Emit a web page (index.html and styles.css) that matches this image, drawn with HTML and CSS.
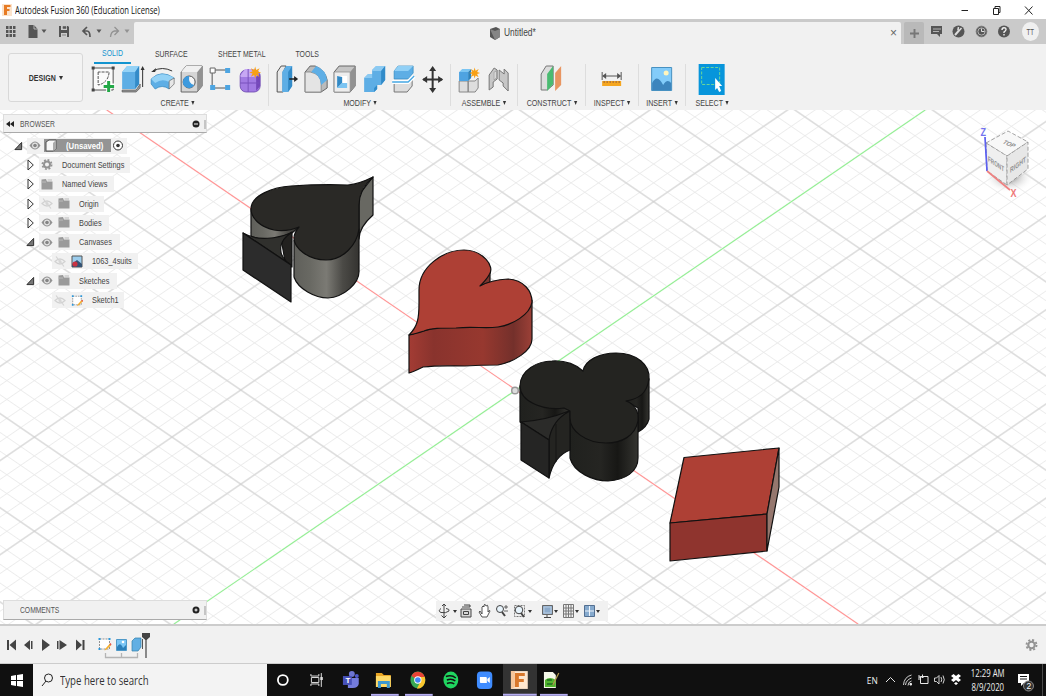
FILE: index.html
```
<!DOCTYPE html>
<html lang="en">
<head>
<meta charset="utf-8">
<title>Autodesk Fusion 360</title>
<link rel="stylesheet" href="styles.css">
</head>
<body>
<svg class="defs" width="0" height="0">
  <symbol id="eye" viewBox="0 0 12 12"><path d="M.5 6Q6 -2 11.500 6Q6 14 .5 6Z" fill="#929292"/><circle cx="6" cy="6" r="2.900" fill="#e4e4e4"/><circle cx="6" cy="6" r="1.800" fill="#858585"/></symbol>
  <symbol id="eyeoff" viewBox="0 0 12 12"><path d="M1 6Q6 1 11 6Q6 11 1 6ZM2 1L10 11" fill="none" stroke="#d2d2d2" stroke-width="1.2"/><circle cx="6" cy="6" r="1.5" fill="#d6d6d6"/></symbol>
  <symbol id="folder" viewBox="0 0 12 12"><path d="M0.5 1L5 0.5L6 3H11.5V11H.5Z" fill="#9a9a9a"/><path d="M6.5 1.5H11M.5 3.5H5" stroke="#b9b9b9"/></symbol>
  <symbol id="gear" viewBox="0 0 14 14"><circle cx="7" cy="7" r="3.5" fill="none" stroke="#939393" stroke-width="2.3"/><circle cx="7" cy="7" r="5.4" fill="none" stroke="#939393" stroke-width="2" stroke-dasharray="2.2 2.04"/></symbol>
  <symbol id="closed" viewBox="0 0 8 12"><path d="M1.5 1L6.8 6L1.5 11Z" fill="#f8f8f8" stroke="#333"/></symbol>
  <symbol id="open" viewBox="0 0 10 10"><path d="M8.5 1V9H1Z" fill="#777" stroke="#222"/></symbol>
  <symbol id="star" viewBox="0 0 12 12"><path d="M6 0L7 3.5L10.5 1.7L8.7 5L12 6L8.7 7L10.3 10.5L7 8.6L6 12L5 8.6L1.7 10.3L3.4 7L0 6L3.4 5L1.7 1.7L5 3.5Z" fill="#f8a014"/></symbol>
  <symbol id="sketch" viewBox="0 0 14 14"><path d="M2 2H12V12H2Z" fill="#fff" stroke="#777" stroke-width=".8" stroke-dasharray="2 1"/><path d="M1 1h2v2H1ZM11 1h2v2h-2ZM1 11h2v2H1Z" fill="#2b98dc"/><path d="M12.5 6.5L8 11.5L7 13.5L9.2 12.5L13.8 8Z" fill="#f5ae2d"/><path d="M12.5 6.5l1.3 1.5" stroke="#e15252" stroke-width="1.5"/></symbol>
</svg>

<header class="titlebar">
  <svg width="10" height="12" viewBox="0 0 10 12"><path d="M0 0H10V12H0Z" fill="#fbe3cc"/><path d="M2 1H8.500V3H5V5H7.500V7H5V11H2Z" fill="#e77b24"/></svg>
  <span class="title">Autodesk Fusion 360 (Education License)</span>
  <svg class="winctl" width="80" height="16" viewBox="0 0 80 16"><path d="M1.500 8.500H8M65 4.500L72.500 12.500M72.500 4.500L65 12.500" stroke="#222" fill="none"/><path d="M33.500 6.500H38.500V12.500H33.500ZM35 6V4.500H40V10.500H39" fill="none" stroke="#222"/></svg>
</header>

<div class="tabstrip">
  <div class="quick">
    <svg width="134" height="25" viewBox="0 0 134 25" fill="#555">
      <path d="M6 7h2.500v3H6zM9.500 7H12v3H9.500zM13 7h2.500v3H13zM6 11h2.500v3H6zM9.500 11H12v3H9.500zM13 11h2.500v3H13zM6 15h2.500v3H6zM9.500 15H12v3H9.500zM13 15h2.500v3H13z"/>
      <path d="M28.500 6H34L37.500 10V19H28.500Z"/><path d="M34 6V10H37.500" stroke="#ccc" fill="none" stroke-width=".8"/>
      <path d="M41.500 10.500H46.500L44 14Z"/>
      <path d="M59 7H68L69 8V18H59Z"/><path d="M61 7H67V11H61ZM61 14H67V18H61Z" fill="#ccc"/><path d="M63 7.500H66V9.500H63ZM62 16H66" stroke="#666" stroke-width=".7"/>
      <path d="M87 8L83 12L87 16M83.500 12H87Q90 12 90 18" stroke="#555" stroke-width="1.700" fill="none"/>
      <path d="M96.500 10.500H101.500L99 14Z"/>
      <path d="M114.500 8L118.500 12L114.500 16M118 12H114.500Q111 12.500 110.500 18" stroke="#929292" stroke-width="1.300" fill="none"/>
      <path d="M124.500 10.500H129.500L127 14Z" fill="#929292"/>
    </svg>
  </div>
  <div class="doc"><svg width="12" height="13" viewBox="0 0 12 13"><path d="M1 2L7 0L11 2V10L6 13L1 10Z" fill="#555"/><path d="M1 2L6 4L11 2V10L6 13Z" fill="#858585"/></svg><span>Untitled*</span><i>×</i></div>
  <div class="plus"><svg width="11" height="11" viewBox="0 0 11 11"><path d="M5.500 1V10M1 5.500H10" stroke="#777" stroke-width="1.900"/></svg></div>
  <svg width="121" height="25" viewBox="0 0 121 25"><path d="M6 7H17V15H15V18L12 15H6Z" fill="#555"/><path d="M8 10H16M8 12.500H14" stroke="#ccc" stroke-width=".8"/><circle cx="33.500" cy="12.500" r="6" fill="#555"/><path d="M30 16L34 11.500" stroke="#ddd" stroke-width="2"/><path d="M36.500 9L34.500 11.300L33 10.500L33.500 8" stroke="#ddd" stroke-width="1.500" fill="none"/><circle cx="56.500" cy="12.500" r="5.300" fill="#555" stroke="#777"/><circle cx="56.500" cy="12.500" r="3.600" fill="none" stroke="#ccc" stroke-width=".8"/><path d="M56.500 9.500V12.500H59.500" stroke="#ddd" fill="none"/><circle cx="79" cy="12.500" r="6" fill="#555"/><path d="M77 11Q77 8.700 79 8.700Q81.200 8.700 81 10.700Q80.700 12 79 13V14M79 15V16.500" stroke="#eee" stroke-width="1.400" fill="none"/><ellipse cx="105.500" cy="12.500" rx="8.500" ry="9.500" fill="#f0f0f0"/><text x="101.500" y="15.500" textLength="7.500" lengthAdjust="spacingAndGlyphs" font-size="8.500" fill="#555">TT</text></svg>
</div>

<section class="ribbon">
  <button class="design"><span>DESIGN</span><b></b></button>
  <div class="tools">
    <nav class="tabs"><span class="on"><em>SOLID</em></span><span class="surface"><em>SURFACE</em></span><span class="wide"><em>SHEET METAL</em></span><span class="last"><em>TOOLS</em></span></nav>
    <div class="groups">
      <div class="group create"><div class="icons">
        <svg viewBox="0 0 29 32"><path d="M4 4H24V26H4Z" fill="#fafafa" stroke="#555" stroke-width="1"/><path d="M9 8V21Q19 19 20 8Z" fill="none" stroke="#555" stroke-dasharray="3 1"/><path d="M2.500 2.500h3v3h-3zM22.500 2.500h3v3h-3zM2.500 24.500h3v3h-3z" fill="#444"/><path d="M19.500 16V28M14 22H26" stroke="#fff" stroke-width="5"/><path d="M19.500 17V28M14.500 22.500H25" stroke="#22a847" stroke-width="3"/></svg>
        <svg viewBox="0 0 29 32"><path d="M4 26L18 26L22 20V24L18 28H4Z" fill="#999" stroke="#555" stroke-width=".7"/><path d="M4 8L9 2H21V20L17 25H4Z" fill="#5eaee5"/><path d="M4 8L9 2H21L17 8Z" fill="#94d2f6"/><path d="M17 8L21 2V20L17 25Z" fill="#338bc8"/><path d="M24.500 4V23" stroke="#333"/><path d="M22.500 6L24.500 2L26.500 6Z" fill="#333"/></svg>
        <svg viewBox="0 0 29 32"><path d="M5 7Q14 2 24 7" fill="none" stroke="#333"/><path d="M3 8L8 4L7 8Z" fill="#333"/><path d="M3 15Q13 5 26 14L21 25Q14 20 7 25L3 20Z" fill="#5eaee5" stroke="#3788bd" stroke-width=".7"/><path d="M3 15Q13 6 26 14L21 18Q14 14 7 19Z" fill="#94d2f6"/><path d="M21 17L26 14V20L21 25Z" fill="#e7e7e7" stroke="#666" stroke-width=".7"/></svg>
        <svg viewBox="0 0 29 32"><path d="M4 8L9 2H25V22L20 28H4Z" fill="#d5d5d5" stroke="#666"/><path d="M20 8L25 2V22L20 28Z" fill="#929292"/><path d="M4 8L9 2H25L20 8Z" fill="#f0f0f0"/><circle cx="12" cy="18" r="6" fill="#f5f5f5" stroke="#555"/><path d="M12 12A6 6 0 1 0 17 21Q11 20 12 12Z" fill="#3d9ade"/></svg>
        <svg viewBox="0 0 29 32"><path d="M6 6H22M6 6V24H22" fill="none" stroke="#555"/><path d="M4 4h5v5H4z" fill="#fff" stroke="#666"/><path d="M19 4h5v5h-5zM4 21h5v5H4zM19 21h5v5h-5z" fill="#4da5e2"/></svg>
        <svg viewBox="0 0 29 32"><rect x="4" y="6" width="20" height="22" rx="6" fill="#a27be3" stroke="#6a46ad" stroke-width=".8"/><path d="M4 12L9 5H18L21 11L18 13H5Z" fill="#c7a8f4"/><path d="M20 13L24 10V22L20 27Z" fill="#7548ba"/><path d="M12 5V28M4 19H23" stroke="#7951bd"/><use href="#star" x="13" y="2" width="12" height="13"/></svg>
      </div><p>CREATE<b></b></p></div>
      <div class="group modify"><div class="icons">
        <svg viewBox="0 0 29 32"><path d="M5 8L9 2H14L11 8V28H5Z" fill="#e8e8e8" stroke="#555"/><path d="M10 8L14 2H20V22L16 28H10Z" fill="#5eaee5"/><path d="M16 8L20 2V22L16 28Z" fill="#338bc8"/><path d="M17 15H23" stroke="#222" stroke-width="1.500"/><path d="M22 12L26 15L22 18Z" fill="#222"/></svg>
        <svg viewBox="0 0 29 32"><path d="M4 8L9 2H14Q24 6 26 16V24L20 28H4Z" fill="#bbb" stroke="#666"/><path d="M4 8H9Q20 10 20 20V28H4Z" fill="#e4e4e4" stroke="#777" stroke-width=".7"/><path d="M10 8L15 2Q25 6 26 16L20 21Q19 10 10 8Z" fill="#5eaee5"/></svg>
        <svg viewBox="0 0 29 32"><path d="M4 8L9 2H25V22L20 28H4Z" fill="#c6c6c6" stroke="#666"/><path d="M4 8H20V28H4Z" fill="#ededed" stroke="#888" stroke-width=".7"/><path d="M20 8L25 2V22L20 28Z" fill="#929292"/><path d="M7 12H17V24H7Z" fill="#fff"/><path d="M7 12L12 13V19L7 24Z" fill="#3289c5"/><path d="M7 24L12 19H17V24Z" fill="#7bc4f2"/></svg>
        <svg viewBox="0 0 29 32"><path d="M4 14L8 10H12V6L16 2H25V16L21 21H17V25L14 28H4Z" fill="#5eaee5"/><path d="M12 6L16 2H25L21 7H12ZM4 14L8 10H12V14Z" fill="#8ccaf2"/><path d="M21 7L25 2V16L21 21ZM14 24L17 21V25L14 28Z" fill="#318bc9"/></svg>
        <svg viewBox="0 0 29 32"><path d="M5 19H18L23 15V22L18 28H5Z" fill="#ddd" stroke="#777"/><path d="M5 7L9 2H24V9L19 15H5Z" fill="#5eaee5" stroke="#3188bf" stroke-width=".7"/><path d="M5 7L9 2H24L19 7Z" fill="#91d0f6"/><path d="M3 18H19L25 12" fill="none" stroke="#fff" stroke-width="4"/><path d="M3 18H19L25 12" fill="none" stroke="#46a8e4" stroke-width="1.300"/></svg>
        <svg viewBox="0 0 29 32"><path d="M14.500 4V27M5 15.500H24" stroke="#333" stroke-width="2"/><path d="M14.500 2L18 7H11ZM14.500 29L18 24H11ZM4 15.500L9 12V19ZM25 15.500L20 12V19Z" fill="#333"/></svg>
      </div><p>MODIFY<b></b></p></div>
      <div class="group assemble"><div class="icons">
        <svg viewBox="0 0 29 32"><path d="M4 17H13V28H4ZM13 17H20L23 14V24L20 28H13Z" fill="#dedede" stroke="#888"/><path d="M4 8L7 5H16L13 8V17H4Z" fill="#7bc5f2"/><path d="M4 8H13V17H4Z" fill="#4ea3e1"/><path d="M13 8L16 5V14L13 17Z" fill="#2c82bd"/><use href="#star" x="14" y="3" width="11" height="12"/></svg>
        <svg viewBox="0 0 29 32"><path d="M5 11L10 4L13 6V15L9 18V23L5 26ZM15 6L20 10V5L24 9V27L19 22V19L15 16Z" fill="#c7c7c7" stroke="#777"/><path d="M10 8L12 7V14L10 16Z" fill="#eee" stroke="#888" stroke-width=".6"/></svg>
      </div><p>ASSEMBLE<b></b></p></div>
      <div class="group construct"><div class="icons"><svg viewBox="0 0 29 32"><path d="M4 10L9 2H16V21L10 26H4Z" fill="#ddd" stroke="#777"/><path d="M10 10L16 2V20L10 27Z" fill="#4abb71"/><path d="M18 9L24 2V21L18 27Z" fill="#e89561"/></svg></div><p>CONSTRUCT<b></b></p></div>
      <div class="group inspect"><div class="icons"><svg viewBox="0 0 29 32"><path d="M5 8V16M24 8V16M6 12H23" stroke="#555"/><path d="M5 12L9 9V15ZM24 12L20 9V15Z" fill="#555"/><path d="M5 17H24V22H5Z" fill="#f5a61f"/><path d="M7 17v2m3-2v2m3-2v2m3-2v2m3-2v2m3-2v2" stroke="#744" stroke-width=".7"/></svg></div><p>INSPECT<b></b></p></div>
      <div class="group insert"><div class="icons"><svg viewBox="0 0 29 32"><path d="M4.500 3.500H24.500V26.500H4.500Z" fill="#83ccfa" stroke="#4791c1"/><circle cx="19" cy="9" r="2.500" fill="#fff5bd"/><path d="M5 19Q10 9 16 21Q20 14 24 19V26H5Z" fill="#3d85bd"/></svg></div><p>INSERT<b></b></p></div>
      <div class="group select"><div class="icons"><svg viewBox="0 0 29 32"><path d="M1.500 0H27.500V31H1.500Z" fill="#0795db"/><path d="M4.500 3.500H22.500V20.500H4.500Z" fill="none" stroke="#69d69a" stroke-dasharray="3 1.500"/><path d="M18 14L25 22H22L24 27L22 28L20 24L18 26Z" fill="#fff"/></svg></div><p>SELECT<b></b></p></div>
    </div>
  </div>
</section>

<main class="viewport">
  <svg class="scene" width="1046" height="514" viewBox="0 110 1046 514" fill="none">
    <defs>
      <pattern id="minor" width="100" height="100" patternUnits="userSpaceOnUse" patternTransform="matrix(.1376 .09416 .1376 -.09416 502.240 390)"><path d="M0 50H100M50 0V100" stroke="#e9e9e9" stroke-width="5.200"/></pattern>
      <pattern id="major" width="100" height="100" patternUnits="userSpaceOnUse" patternTransform="matrix(.688 .4708 .688 -.4708 447.200 390)"><path d="M0 50H100M50 0V100" stroke="#cdcdcd" stroke-width="1.200"/></pattern>
      <linearGradient id="metal"><stop stop-color="#5f5f5a"/><stop offset=".25" stop-color="#696963"/><stop offset=".5" stop-color="#7b7a74"/><stop offset=".75" stop-color="#4b4a46"/><stop offset="1" stop-color="#343330"/></linearGradient>
      <linearGradient id="wall"><stop stop-color="#a33c34"/><stop offset=".2" stop-color="#89332d"/><stop offset=".6" stop-color="#97382f"/><stop offset=".85" stop-color="#74302b"/><stop offset="1" stop-color="#9c4037"/></linearGradient>
      <linearGradient id="ink"><stop stop-color="#20211e"/><stop offset=".45" stop-color="#252522"/><stop offset=".7" stop-color="#171715"/><stop offset="1" stop-color="#343430"/></linearGradient>
      <radialGradient id="shade"><stop stop-color="#777" stop-opacity=".9"/><stop offset="1" stop-color="#fff" stop-opacity="0"/></radialGradient>
    </defs>
    <path d="M0 110H1046V624H0Z" fill="#fff"/><path d="M0 110H1046V624H0Z" fill="url(#minor)"/><path d="M0 110H1046V624H0Z" fill="url(#major)"/>
    <path d="M106.800 110L858 624" stroke="#fff" stroke-width="2.500"/><path d="M174 624L925.200 110" stroke="#fff" stroke-width="2.500"/>
    <path d="M106.800 110L858 624" stroke="#ff9696" stroke-width="1.200"/><path d="M174 624L925.200 110" stroke="#96ee96" stroke-width="1.200"/>
    <circle cx="515" cy="390.500" r="3.300" fill="#ddd" stroke="#999" stroke-width="1.500"/>
    <g stroke="#111" stroke-width="1.200" stroke-linejoin="round">
      <path d="M251 209V236Q264 244 292 233L299 227L280 224Z" fill="url(#metal)"/>
      <path d="M373 177V215C365 222 359 230 359 239V195Z" fill="#686862"/>
      <path d="M294 240V277C298 289 315 298 328 298C343 297 360 284 359 270V229Z" fill="url(#metal)"/>
      <path d="M251 209C251 195 274 187 291 186Q322 184 348 185Q359 184 373 177C363 186 359 194 359 205V229C357 245 343 260 326 260C308 260 294 248 294 238Q294 233 299 227Q287 232 274 230C260 227 251 218 251 209Z" fill="#2a2926"/>
      <path d="M281 238L292 232V267H286Z" fill="#22211f"/><path d="M243 233C258 242 278 238 291 233C278 241 278 254 287 262L291 265Z" fill="#30302d"/><path d="M243 233L291 265V302L243 270Z" fill="#2c2c2c"/>
      <path d="M409 335V373Q413 372 423 367C440 365 450 366 465 366C480 365 493 365 498 365C514 362 532 351 532 339V300Z" fill="url(#wall)"/>
      <path d="M490 270V282L480 286L485 278Z" fill="#79352e"/>
      <path d="M409 335C418 326 419 318 419 303V290C419 267 443 250 464 250C482 250 496 266 489 275Q487 279 480 286Q491 280 508 279C524 280 532 291 532 302C530 315 512 325 498 327C483 329 475 326 456 328C441 328 431 328 424 331Q415 334 409 335Z" fill="#ae4035"/>
      <path d="M520 386V422L549 440L570 414L569 405Z" fill="url(#ink)"/>
      <path d="M649 379V419Q647 427 638 432V408L626 401Z" fill="url(#ink)"/>
      <path d="M570 418V458C574 473 594 481 608 481C625 480 638 472 638 458V420Z" fill="url(#ink)"/>
      <path d="M521 422Q547 420 569 411Q552 424 549 440Z" fill="#2b2b29"/>
      <path d="M549 440Q552 420 570 411V450Q554 456 549 478Z" fill="#242421"/><path d="M556 424V462" stroke-width=".8"/>
      <path d="M521 422L549 440V478L521 460Z" fill="#252524"/>
      <path d="M520 386C520 370 538 361 552 361Q571 360 583 371C585 360 600 353 616 353C637 353 650 365 649 379C647 394 638 399 626 401C635 404 639 412 638 421C635 436 622 443 606 443C586 443 570 431 570 418L570 411L564 408C542 411 520 401 520 386Z" fill="#242421"/>
      <path d="M684 457.500L779 448L767 514L670 523Z" fill="#ae4035"/><path d="M670 523L767 514V551L670 561Z" fill="#8f342e"/><path d="M779 448V487L767 551V514Z" fill="#95776e"/>
    </g>
    <ellipse cx="1009" cy="177" rx="25" ry="16" fill="url(#shade)"/>
    <g stroke="#8d8d8d" stroke-width=".8" stroke-dasharray="4 2"><path d="M986 143L1008 131L1028 142L1007 156Z" fill="#f8f8f8"/><path d="M986 143L1007 156V185L987 171Z" fill="#efefef"/><path d="M1007 156L1028 142V169L1007 185Z" fill="#e7e7e7"/></g>
    <path d="M985 137L987 171" stroke="#5c60f0" stroke-width="1.700"/><path d="M987 171L1010 190" stroke="#ee8181" stroke-width="1.700"/>
    <text x="980.500" y="136" fill="#7373ef" font-size="11" font-weight="bold" textLength="5.500" lengthAdjust="spacingAndGlyphs">Z</text><text x="1010.500" y="197" fill="#ee7878" font-size="10" font-weight="bold" textLength="6" lengthAdjust="spacingAndGlyphs">X</text>
    <g fill="#929292" font-size="7.500" font-weight="bold"><text transform="matrix(.8 .55 0 1 988 161)" textLength="20" lengthAdjust="spacingAndGlyphs">FRONT</text><text transform="matrix(.8 -.58 0 1 1010 173)" textLength="20" lengthAdjust="spacingAndGlyphs">RIGHT</text><text transform="matrix(.8 .35 -.65 .6 1002 143)" textLength="14" lengthAdjust="spacingAndGlyphs">TOP</text></g>
  </svg>

  <aside class="browser">
    <div class="panel"><svg width="8" height="6" viewBox="0 0 8 6"><path d="M4 0V6L0 3ZM8 0V6L4 3Z" fill="#222"/></svg><span>BROWSER</span><svg class="dot" width="16" height="12" viewBox="0 0 16 12"><circle cx="4" cy="6" r="3.500" fill="#222"/><path d="M2 6H6" stroke="#fff"/><path d="M13 2V11" stroke="#999"/></svg></div>
    <ul class="tree">
      <li class="root"><svg class="arrow"><use href="#open"/></svg><div class="pill w100"><svg><use href="#eye"/></svg><div class="chosen"><svg viewBox="0 0 12 13"><path d="M1 3L4 1H11V10L8 12H1Z" fill="#f7f7f7" stroke="#555"/><path d="M8 4L11 1V10L8 12Z" fill="#aaa"/></svg><span>(Unsaved)</span></div><svg class="radio" viewBox="0 0 12 12"><circle cx="6" cy="6" r="4.500" fill="#fff" stroke="#333"/><circle cx="6" cy="6" r="1.800" fill="#333"/></svg></div></li>
      <li><svg class="arrow"><use href="#closed"/></svg><div class="pill w91"><svg><use href="#gear"/></svg><span>Document Settings</span></div></li>
      <li><svg class="arrow"><use href="#closed"/></svg><div class="pill w75"><svg><use href="#folder"/></svg><span>Named Views</span></div></li>
      <li><svg class="arrow"><use href="#closed"/></svg><div class="pill w65"><svg><use href="#eyeoff"/></svg><svg><use href="#folder"/></svg><span>Origin</span></div></li>
      <li><svg class="arrow"><use href="#closed"/></svg><div class="pill w70"><svg><use href="#eye"/></svg><svg><use href="#folder"/></svg><span>Bodies</span></div></li>
      <li><svg class="arrow"><use href="#open"/></svg><div class="pill w81"><svg><use href="#eye"/></svg><svg><use href="#folder"/></svg><span>Canvases</span></div></li>
      <li class="leaf"><div class="pill w86"><svg><use href="#eyeoff"/></svg><svg viewBox="0 0 12 13"><path d="M1 1H11V12H1Z" fill="#9ccded" stroke="#555"/><path d="M1 9L6 5L11 9V12H1Z" fill="#345273"/><circle cx="4" cy="9" r="2.600" fill="#c93242"/></svg><span>1063_4suits</span></div></li>
      <li><svg class="arrow"><use href="#open"/></svg><div class="pill w78"><svg><use href="#eye"/></svg><svg><use href="#folder"/></svg><span>Sketches</span></div></li>
      <li class="leaf"><div class="pill w72"><svg><use href="#eyeoff"/></svg><svg><use href="#sketch"/></svg><span>Sketch1</span></div></li>
    </ul>
  </aside>

  <div class="panel comments"><span>COMMENTS</span><svg class="dot" width="16" height="12" viewBox="0 0 16 12"><circle cx="4" cy="6" r="3.500" fill="#222"/><path d="M2.500 6H5.500M4 4.500V7.500" stroke="#fff"/><path d="M13 2V11" stroke="#999"/></svg></div>
  <div class="viewbar"><svg width="172" height="20" viewBox="436 601 172 20" fill="none" stroke="#444">
    <path d="M444 604V618M441 608.500Q437.500 611 441 612.500Q446 613.500 449 611Q450 609 446 608.500M442 606L444 604L446 606M441.500 615.500L444 618L446.500 615.500"/>
    <path d="M461 609H471V617H461ZM462 607H470M464 605H470V607" fill="#d9d9d9"/><path d="M463.500 611.500H468.500V614.500H463.500Z"/>
    <path d="M480 611L482 614V607Q483 605 484 607V605Q485 603 486 606Q488 604 488 607V612Q490 609 490 611L487 617H482L479 612Z" fill="#fff" stroke-width=".9"/>
    <circle cx="500" cy="609" r="3.500" fill="#e8f4fc"/><path d="M502 612L505 616" stroke-width="2"/><path d="M504 607H508M506 605V609M504 611H508" stroke-width=".8"/>
    <path d="M514.500 605.500H524.500V616.500H514.500Z" stroke-dasharray="2 1" stroke="#777"/><circle cx="519" cy="610" r="3.800" fill="#e8f4fc"/><path d="M521 613L524 617" stroke-width="2"/>
    <path d="M542.500 605.500H552.500V614.500H542.500Z" fill="#8dabcb" stroke="#666"/><path d="M547 615V618M544 617.500H551"/><path d="M544 607H551V613H544Z" stroke="#b9cce0"/>
    <path d="M563.500 604.500H573.500V617.500H563.500ZM566 605V617M568.500 605V617M571 605V617M564 608H573M564 611H573M564 614H573" stroke="#777"/>
    <path d="M584.500 605.500H594.500V616.500H584.500Z" fill="#86aace" stroke="#536f91"/><path d="M589.500 606V616M585 611H594" stroke="#eef4fb"/>
    <path d="M453 610H457L455 613ZM528 610H532L530 613ZM554 610H558L556 613ZM575 610H579L577 613ZM596 610H600L598 613Z" fill="#333" stroke="none"/>
  </svg></div>
</main>

<footer class="timeline"><svg width="160" height="38" viewBox="0 626 160 38" fill="#444"><path d="M7 640H9V650H7ZM16 639.500V650.500L9.500 645ZM24 645L30 640V650ZM31 641H32.500V649H31ZM42 639L50 645L42 651ZM57 641H58.500V649H57ZM59.500 640L67 645L59.500 650ZM76 639.500L82 645L76 650.500ZM82.500 640H84.500V650H82.500Z"/><use href="#sketch" x="97.500" y="637" width="14" height="14"/><path d="M116.500 639.500H126.500V650.500H116.500Z" fill="#7bc6f5" stroke="#4f99c8"/><path d="M117 647Q120 641 123 648L126 645V650H117Z" fill="#2b80ba"/><circle cx="123" cy="642" r="1.300" fill="#fff"/><path d="M132 641L135 638H141V647L138 651H132Z" fill="#61afe3" stroke="#317fab" stroke-width=".7"/><path d="M142.500 639V649" stroke="#555"/><path d="M105.500 653V657.500H137.500V653M121.500 653V657" fill="none" stroke="#b4b4b4" stroke-width="1.300"/><path d="M142 633H150V637L146.500 640H145.500L142 637Z"/><path d="M146 638V658" stroke="#444" stroke-width="1.200"/></svg><svg class="settings" width="13" height="14"><use href="#gear"/></svg></footer>

<div class="taskbar">
  <div class="start"><svg width="12" height="13" viewBox="0 0 12 13"><path d="M0 2L5 1V6H0ZM6 1L12 0V6H6ZM0 7H5V12L0 11ZM6 7H12V13L6 12Z" fill="#fff"/></svg></div>
  <div class="search"><svg width="12" height="14" viewBox="0 0 12 14"><circle cx="7.500" cy="5" r="4" fill="none" stroke="#222"/><path d="M5 8L1 13" stroke="#222"/></svg><span>Type here to search</span></div>
  <div class="apps">
    <svg viewBox="0 0 34 32"><circle cx="16" cy="16" r="5" fill="none" stroke="#fff" stroke-width="1.800"/></svg>
    <svg viewBox="0 0 34 32"><path d="M10 10V12H18V10M10 22V20H18V22M10.500 13.500H18V18.500H10.500ZM20.500 9V23" fill="none" stroke="#ddd"/><path d="M19.500 13H22V16H19.500Z" fill="#ddd"/></svg>
    <svg viewBox="0 0 34 32"><circle cx="18" cy="10" r="3" fill="#6d75d2"/><circle cx="23" cy="12" r="2" fill="#5059c9"/><path d="M14 14H25V20Q24 24 19 24H14Z" fill="#747cdc"/><path d="M9 12H18V21H9Z" fill="#4751b9"/><text x="11.500" y="19.500" font-size="8" font-weight="bold" fill="#fff">T</text></svg>
    <svg viewBox="0 0 34 32"><path d="M8 9H14L16 11H23V23H8Z" fill="#e9a524"/><path d="M8 12H23V23H8Z" fill="#ffda68"/><path d="M10 17H22V24H19V20H13V24H10Z" fill="#3d98d0"/><path d="M3 30H31V32H3Z" fill="#b6aef2"/></svg>
    <svg viewBox="0 0 34 32"><ellipse cx="16" cy="16" rx="7.500" ry="8.500" fill="#37a853"/><path d="M16 16L9.500 12A7.500 8.500 0 0 1 23 13Z" fill="#e74335"/><path d="M16 13H23A7.500 8.500 0 0 1 15 24.500L19 17Z" fill="#fac52e"/><circle cx="16" cy="16" r="3.700" fill="#fff"/><circle cx="16" cy="16" r="2.800" fill="#4285f4"/><path d="M3 30H31V32H3Z" fill="#b6aef2"/></svg>
    <svg viewBox="0 0 34 32"><ellipse cx="16" cy="16" rx="7.500" ry="8.500" fill="#20d660"/><path d="M11 12.500Q17 10.500 21 14M12 16Q17 14 20.500 17M12 19.500Q16 18 19.500 20" fill="none" stroke="#111" stroke-width="1.500"/></svg>
    <svg viewBox="0 0 34 32"><rect x="8" y="7.500" width="15.500" height="17.500" rx="4" fill="#3f8cff"/><path d="M11 13H17Q18 13 18 14V19H12Q11 19 11 18ZM18.500 15L21 13V19L18.500 17Z" fill="#fff"/></svg>
    <svg class="active" viewBox="0 0 34 32"><path d="M8 7H25V25H8Z" fill="#ffe7cf"/><path d="M12 9H22V12H16V15H21V18H16V23H12Z" fill="#d9782c"/><path d="M8 7H12V23L8 25Z" fill="#f6c69b"/><path d="M0 30H34V32H0Z" fill="#b6aef2"/></svg>
    <svg viewBox="0 0 34 32"><path d="M7 8H16L19 11V24H7Z" fill="#f5f8e9"/><path d="M8 16Q13 12 19 16V23H8Z" fill="#52b52f"/><path d="M10 16H15M10 20H17" stroke="#1d6923" stroke-width="1.600"/><path d="M22 9L16 21" stroke="#b09b4c" stroke-width="1.300"/><path d="M3 30H31V32H3Z" fill="#b6aef2"/></svg>
  </div>
  <div class="tray"><span class="lang">EN</span>
    <svg width="82" height="32" viewBox="883 664 82 32" fill="none" stroke="#e7e7e7"><path d="M886 682L890.500 677.500L895 682"/><path d="M903.500 685Q904 677 911.500 675M905.500 685Q906 680 911.500 678M908 685.500Q908 682 911.500 681" stroke-width=".9"/><path d="M910 683.500h1.500v1.500H910z" fill="#eee"/><path d="M920.500 676.500H928V683.500H920.500Z"/><path d="M919 675V680M922.500 674.500V678M919 677H924" stroke-width="1"/><path d="M924 678H927V682H924Z" fill="#111" stroke="none"/><path d="M934.500 678H936.500L939 675.500V684L936.500 681.500H934.500ZM941 677Q942.500 680 941 682M943 675.500Q945.500 680 943 683.500" stroke-width=".9"/><path d="M953.500 674L956 676L958.500 674L961 676L958.500 678L961 680L958.500 682L956 680L953.500 682L951 680L953.500 678L951 676ZM956 682L958 683.500L956 685L954 683.500Z" fill="#fff" stroke="none"/></svg>
    <div class="clock"><span>12:29 AM</span><span>8/9/2020</span></div>
    <svg width="35" height="32" viewBox="1011 664 35 32"><path d="M1018 674H1029V683H1024L1021 686V683H1018Z" fill="#fff"/><path d="M1020 676.500H1027M1020 679H1027" stroke="#111"/><circle cx="1028.500" cy="686" r="5" fill="#333" stroke="#888"/><text x="1026.500" y="689" fill="#fff" font-size="8.500">2</text><path d="M1042.500 664V696" stroke="#4a4a4a"/></svg>
  </div>
</div>
</body>
</html>
```

FILE: styles.css
```
*{box-sizing:border-box}
body{margin:0;width:1046px;height:696px;overflow:hidden;display:flex;flex-direction:column;background:#f1f1f1;color:#444;font:9px/12px "Liberation Sans",Arial,sans-serif}
.defs{position:absolute}
svg{display:block;flex-shrink:0}
.titlebar{height:19px;display:flex;align-items:center;padding-left:2px;gap:3px;background:#fff}
.title{font:10.500px/16px "Open Sans",sans-serif;color:#111;transform:scaleX(.73);transform-origin:0 50%;white-space:nowrap;width:160px}
.winctl{margin-left:auto;margin-right:6px}
.tabstrip{height:25px;display:flex;background:#cacaca}
.quick{width:134px}
.doc{width:767px;margin-top:3px;background:#f1f1f1;display:flex;align-items:center;padding-left:355px;border-radius:2px 2px 0 0;color:#444}
.doc span{margin-left:3px;font-size:10px;transform:scaleX(.84);transform-origin:0 50%}
.doc i{font:12px/12px "Liberation Sans",sans-serif;color:#666;margin-left:auto;margin-right:4px}
.plus{width:20px;margin:3px 1px 0 3px;background:#b9b9b9;border-radius:2px 2px 0 0;display:grid;place-items:center}
.ribbon{height:67px;display:flex;background:#f1f1f1;border-bottom:1px solid #ddd}
.design{margin:9px 6px 8px 8px;width:75px;border:1px solid #d8d8d8;border-radius:3px;background:#f3f3f3;padding:0 3px 0 0;display:flex;align-items:center;justify-content:center;color:#333;font:bold 9px "Liberation Sans",sans-serif}
.design span{transform:scaleX(.78)}
.design b,.group b{display:inline-block;border:2.500px solid transparent;border-top:4px solid #333;border-bottom:0}
.group b{margin-left:3px;transform:translateY(-1px)}
.tabs{display:flex;height:20px;padding-left:5px}
.tabs span{height:20px;display:grid;place-items:center}
.tabs em{font-style:normal;transform:scaleX(.77);white-space:nowrap}
.tabs .on{width:37px;color:#1394cf;border-bottom:2px solid #1394cf}
.tabs .surface{width:46px;margin:0 15px 0 17px}
.tabs .wide{width:66px}
.tabs .last{width:64px}
.groups{display:flex}
.group{height:42px;border-right:1px solid #ddd;display:flex;flex-direction:column;align-items:center}
.icons{display:flex;height:32px}
.icons svg{width:29.300px;height:32px}
.group p{margin:1px 0 0;white-space:nowrap;transform:scaleX(.79)}
.create{width:180px;padding-right:3px}.modify{width:182px}.assemble{width:67px}.construct{width:68px}.inspect{width:53px}.insert{width:47px}.select{width:52px;border:0}
.viewport{height:514px;position:relative;margin-top:-1px}
.scene{position:absolute;left:0;top:0}
.browser{position:absolute;left:3px;top:4px}
.panel{width:204px;height:19px;background:#f1f1f1;border:1px solid #ddd;border-bottom-color:#aaa;display:flex;align-items:center;padding-left:2px;color:#555}
.panel span{margin-left:6px;transform:scaleX(.75);transform-origin:0 50%}
.panel .dot{margin-left:auto;margin-right:-2px}
.comments{position:absolute;left:3px;top:490px;height:20px;padding-left:10px}
.viewbar{position:absolute;left:436px;top:491px;background:#f1f1f1}
.tree{list-style:none;margin:3px 0 0;padding:0}
.tree li{height:19.300px;display:flex;align-items:center;padding-left:23px}
.tree .root{padding-left:11px}
.tree .arrow{width:9px;height:12px;margin-right:4px}
.tree .leaf{padding-left:49px}
.pill{height:16px;background:#f1f1f1;display:flex;align-items:center;padding-left:2px;gap:5px}
.pill svg{width:12px;height:13px}
.pill span{font-size:9px;transform:scaleX(.82);transform-origin:0 50%;white-space:nowrap;margin-left:4px}
.pill .chosen span{transform:scaleX(.86)}
.chosen{width:67px;height:13px;background:#949494;color:#fff;font-weight:bold;display:flex;align-items:center;margin-left:-2px;padding-left:1px;gap:5px}
.chosen span{width:39px}
.pill .radio{margin-left:-4px}
.w100{width:100px}.w91{width:91px}.w75{width:75px}.w65{width:65px}.w70{width:70px}.w81{width:81px}.w86{width:86px}.w78{width:78px}.w72{width:72px}
.timeline{height:40px;border-top:2px solid #ccc;border-bottom:1px solid #ccc;background:#f1f1f1;display:flex;justify-content:space-between;align-items:center;padding-right:8px}
.taskbar{height:32px;background:#101010;display:flex}
.start{width:33px;display:grid;place-items:center}
.search{width:234px;background:#f3f3f3;display:flex;align-items:center;padding-left:8px;gap:7px;color:#333}
.search span{font:12.500px "Open Sans",sans-serif;transform:scaleX(.77);transform-origin:0 50%;white-space:nowrap}
.apps{display:flex}
.apps svg{width:33.700px;height:32px}
.apps .active{background:#333}
.tray{margin-left:auto;display:flex;align-items:center;color:#eee}
.lang{font:9.500px "Open Sans",sans-serif;transform:scaleX(.88);margin-right:5px}
.clock{width:46px;display:flex;flex-direction:column;align-items:center;font:10px/14px "Open Sans",sans-serif}
.clock span{transform:scaleX(.78);white-space:nowrap}
```
